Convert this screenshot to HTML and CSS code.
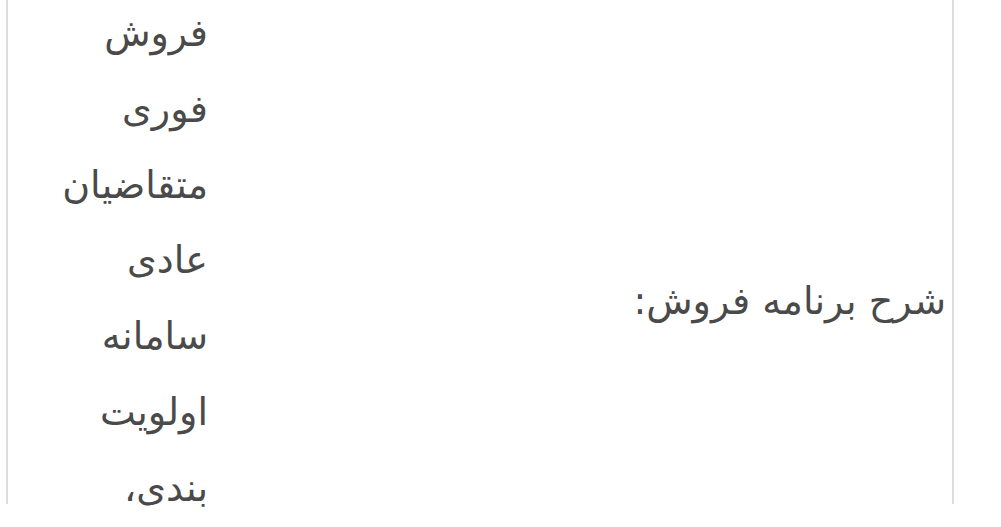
FILE: index.html
```html
<!DOCTYPE html>
<html lang="fa">
<head>
<meta charset="utf-8">
<title>شرح برنامه فروش</title>
<link rel="stylesheet" href="styles.css">
</head>
<body>
<div class="frame">
  <div class="row" dir="rtl">
    <div class="label">شرح برنامه فروش:</div>
    <div class="value">فروش فوری متقاضیان عادی سامانه اولویت بندی،</div>
  </div>
</div>
</body>
</html>
```
FILE: styles.css
```css
html, body {
  margin: 0;
  padding: 0;
  background: #ffffff;
  overflow: hidden;
  height: 100%;
}
body {
  font-family: "DejaVu Sans", sans-serif;
  color: #4a4a4a;
}
.frame {
  margin-left: 6px;
  width: 944px;
  height: 504px;
  border-left: 2px solid #dedede;
  border-right: 2px solid #dedede;
}
.row {
  display: flex;
  height: 100%;
}
.label {
  flex: 1;
  display: flex;
  align-items: center;
  padding-top: 98px;
  padding-right: 6px;
  font-size: 38px;
  line-height: 76px;
}
.value {
  width: 160px;
  padding-left: 40px;
  margin-top: -4px;
  font-size: 38px;
  line-height: 75.8px;
  text-align: right;
  white-space: normal;
}
```
